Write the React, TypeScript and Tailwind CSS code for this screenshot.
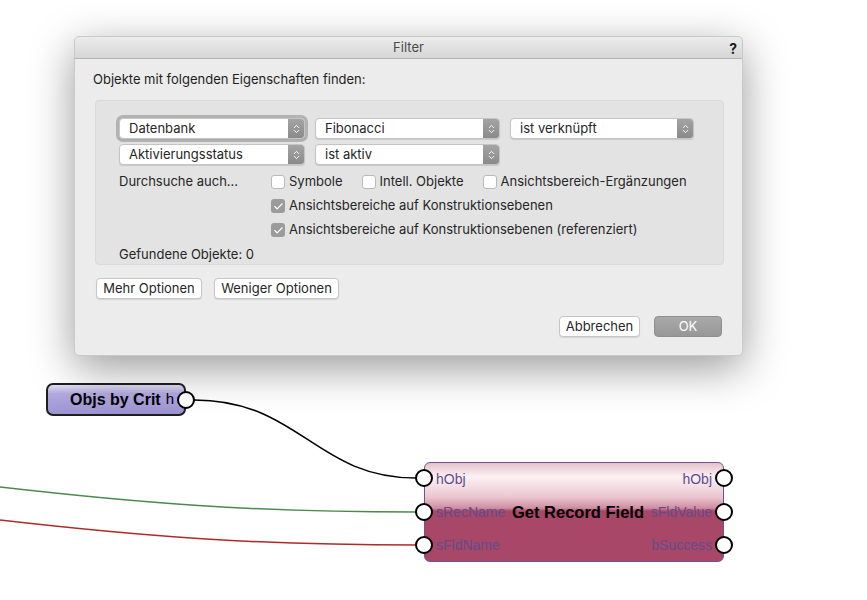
import { Check, ChevronDown, ChevronUp } from "lucide-react";

const ui = "font-['Inter','Roboto','Liberation_Sans',sans-serif]";

const Select = ({ label, width, focused }: { label: string; width: string; focused?: boolean }) => (
  <div
    className={`${width} h-[21px] flex items-stretch rounded-[4px] bg-white border border-[#c4c4c4] shadow-[0_1px_1px_rgba(0,0,0,0.12)] ${
      focused ? "ring-[3px] ring-[#9c9c9c]/70" : ""
    }`}
  >
    <span className="flex-1 pl-[9px] text-[13px] leading-[19px] text-[#262626]">{label}</span>
    <span className="w-[16px] flex flex-col items-center justify-center rounded-r-[3px] bg-[linear-gradient(#a4a4a4,#8a8a8a)] text-white">
      <ChevronUp size={9} strokeWidth={2.5} className="-mb-[2px]" />
      <ChevronDown size={9} strokeWidth={2.5} className="-mt-[2px]" />
    </span>
  </div>
);

const Box = ({ label, checked }: { label: string; checked?: boolean }) => (
  <label className="flex items-center gap-[4px] text-[13px] text-[#262626]">
    {checked ? (
      <span className="size-[14px] rounded-[3px] bg-[#9b9b9b] flex items-center justify-center text-white">
        <Check size={11} strokeWidth={2.5} />
      </span>
    ) : (
      <span className="size-[14px] rounded-[3px] bg-white border border-[#b9b9b9]" />
    )}
    {label}
  </label>
);

const Button = ({ label, width, primary }: { label: string; width: string; primary?: boolean }) => (
  <button
    className={`${width} h-[21px] rounded-[4px] text-[13px] leading-[19px] ${
      primary
        ? "bg-[linear-gradient(#a9a9a9,#979797)] text-white border border-[#8f8f8f]"
        : "bg-white text-[#262626] border border-[#c6c6c6] shadow-[0_1px_1px_rgba(0,0,0,0.1)]"
    }`}
  >
    {label}
  </button>
);

const Port = ({ x, y }: { x: number; y: number }) => (
  <circle cx={x} cy={y} r={8} fill="white" stroke="black" strokeWidth={2} />
);

const App = () => {
  return (
    <div className={`relative w-[867px] h-[600px] bg-white overflow-hidden ${ui}`}>
      {/* wires */}
      <svg className="absolute inset-0" width={867} height={600}>
        <path d="M194 400 C 300 400, 315 478, 416 478" fill="none" stroke="black" strokeWidth={1.5} />
        <path d="M0 487 C 140 503, 250 512, 416 512" fill="none" stroke="#4b8a4b" strokeWidth={1.5} />
        <path d="M0 520 C 140 536, 250 545, 416 545" fill="none" stroke="#b02a2a" strokeWidth={1.5} />
      </svg>

      {/* Objs by Crit node */}
      <div className="absolute left-[46px] top-[383px] w-[140px] h-[33px] rounded-[7px] border-2 border-[#1f1f1f] bg-[linear-gradient(#e4e1f5_0%,#b2aae0_30%,#9c93d1_100%)] flex items-center justify-end pr-[10px] font-['Liberation_Sans',sans-serif] text-black">
        <span className="text-[16px] font-bold">Objs by Crit</span>
        <span className="text-[15px] ml-[5px]">h</span>
      </div>

      {/* Get Record Field node */}
      <div className="absolute left-[424px] top-[462px] w-[300px] h-[100px] rounded-[6px] border border-[#6e5590] bg-[linear-gradient(#e6c1cc_0%,#fbf1f4_14%,#ecc8d2_34%,#cf8ea2_46%,#a84767_49%,#a84767_100%)] font-['Liberation_Sans',sans-serif] text-[14px] text-[#634c8c]">
        <div className="flex flex-col justify-between h-full py-[8px] px-[11px]">
          <div className="flex justify-between leading-[16px]">
            <span>hObj</span>
            <span>hObj</span>
          </div>
          <div className="flex justify-between items-center leading-[16px]">
            <span>sRecName</span>
            <span className="text-[16.5px] font-bold text-black">Get Record Field</span>
            <span>sFldValue</span>
          </div>
          <div className="flex justify-between leading-[16px]">
            <span>sFldName</span>
            <span>bSuccess</span>
          </div>
        </div>
      </div>

      <svg className="absolute inset-0 pointer-events-none" width={867} height={600}>
        <Port x={186} y={400} />
        <Port x={424} y={478} />
        <Port x={424} y={512} />
        <Port x={424} y={545} />
        <Port x={724} y={478} />
        <Port x={724} y={512} />
        <Port x={724} y={545} />
      </svg>

      {/* Filter dialog */}
      <div className="absolute left-[74px] top-[36px] w-[669px] h-[320px] rounded-[5px] bg-[#ececec] border border-[#c9c9c9] shadow-[0_12px_44px_rgba(0,0,0,0.4)] flex flex-col">
        <div className="h-[22px] shrink-0 relative flex items-center justify-center rounded-t-[5px] bg-[linear-gradient(#ececec,#d6d6d6)] border-b border-[#b3b3b3]">
          <span className="text-[13px] text-[#4a4a4a]">Filter</span>
          <span className="absolute right-[5px] top-[1px] text-[14px] font-bold text-[#1a1a1a]">?</span>
        </div>

        <div className="flex-1 flex flex-col px-[19px] pt-[12px]">
          <p className="text-[13px] leading-[16px] text-[#1e1e1e] -ml-px">Objekte mit folgenden Eigenschaften finden:</p>

          <div className="mt-[13px] ml-px w-[629px] h-[165px] rounded-[4px] bg-[#e3e3e3] border border-[#dadada] pl-[23px] pt-[17px] flex flex-col">
            <div className="flex gap-[10px]">
              <Select label="Datenbank" width="w-[186px]" focused />
              <Select label="Fibonacci" width="w-[185px]" />
              <Select label="ist verknüpft" width="w-[184px]" />
            </div>
            <div className="flex gap-[10px] mt-[5px]">
              <Select label="Aktivierungsstatus" width="w-[186px]" />
              <Select label="ist aktiv" width="w-[185px]" />
            </div>

            <div className="flex items-center mt-[9px] h-[16px]">
              <span className="w-[152px] text-[13px] text-[#262626]">Durchsuche auch...</span>
              <div className="flex gap-[19px]">
                <Box label="Symbole" />
                <Box label="Intell. Objekte" />
                <Box label="Ansichtsbereich-Ergänzungen" />
              </div>
            </div>
            <div className="pl-[152px] mt-[8px] h-[16px] flex items-center">
              <Box label="Ansichtsbereiche auf Konstruktionsebenen" checked />
            </div>
            <div className="pl-[152px] mt-[8px] h-[16px] flex items-center">
              <Box label="Ansichtsbereiche auf Konstruktionsebenen (referenziert)" checked />
            </div>
            <p className="mt-[8px] text-[13px] leading-[16px] text-[#262626]">Gefundene Objekte: 0</p>
          </div>

          <div className="flex gap-[12px] mt-[13px] ml-[2px]">
            <Button label="Mehr Optionen" width="w-[106px]" />
            <Button label="Weniger Optionen" width="w-[125px]" />
          </div>

          <div className="flex justify-end gap-[14px] mt-[17px] mr-px">
            <Button label="Abbrechen" width="w-[81px]" />
            <Button label="OK" width="w-[68px]" primary />
          </div>
        </div>
      </div>
    </div>
  );
};

export default App;
